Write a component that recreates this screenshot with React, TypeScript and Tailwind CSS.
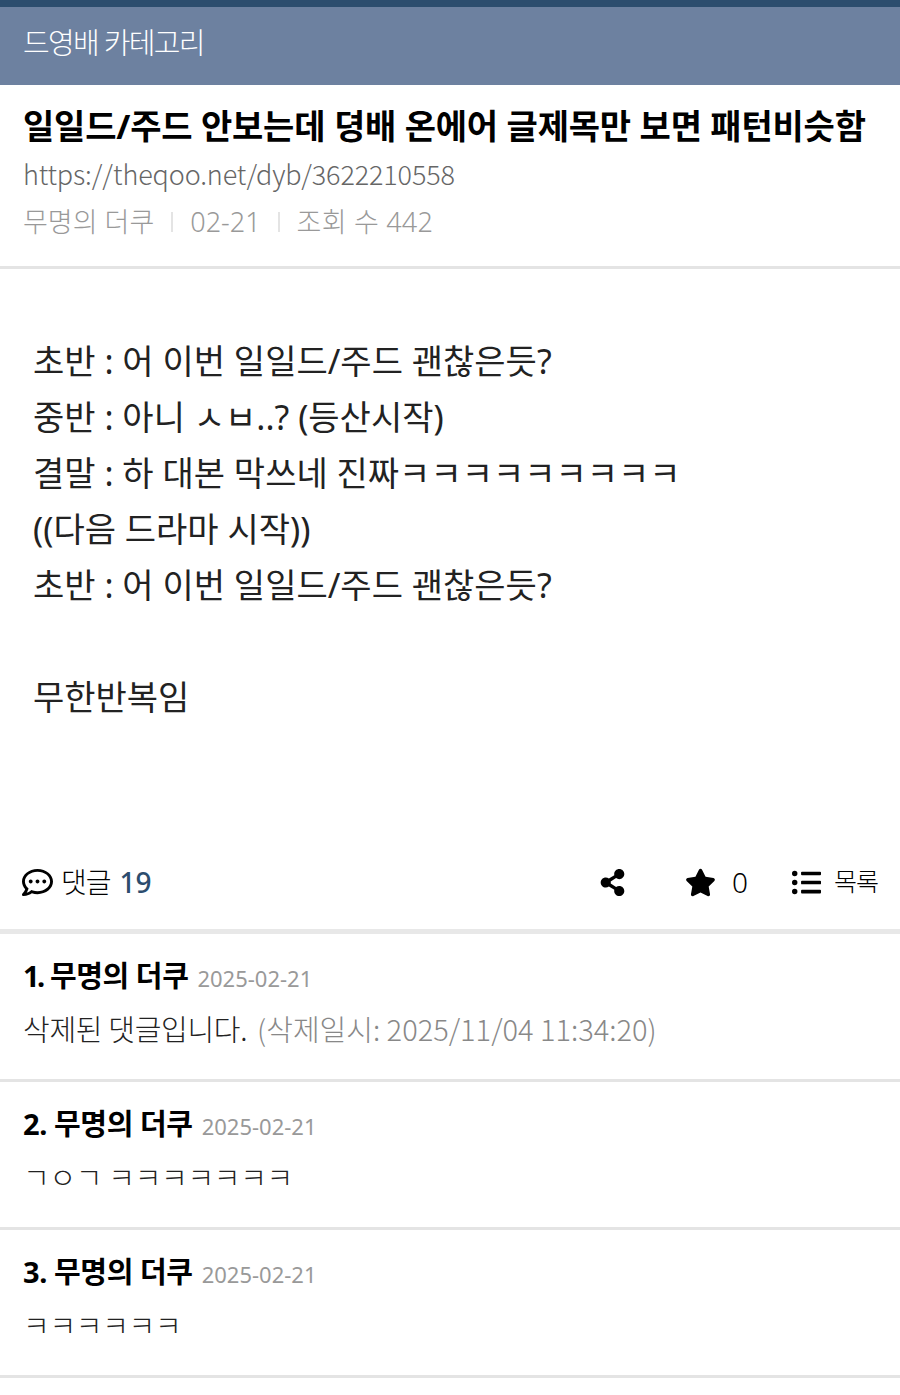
import { FaListUl, FaRegCommentDots, FaShareAlt, FaStar } from "react-icons/fa";

const comments = [
  { no: 1, text: "삭제된 댓글입니다.", deleted: "(삭제일시: 2025/11/04 11:34:20)" },
  { no: 2, text: "ㄱㅇㄱ ㅋㅋㅋㅋㅋㅋㅋ" },
  { no: 3, text: "ㅋㅋㅋㅋㅋㅋ" },
];

const lines = [
  "초반 : 어 이번 일일드/주드 괜찮은듯?",
  "중반 : 아니 ㅅㅂ..? (등산시작)",
  "결말 : 하 대본 막쓰네 진짜ㅋㅋㅋㅋㅋㅋㅋㅋㅋ",
  "((다음 드라마 시작))",
  "초반 : 어 이번 일일드/주드 괜찮은듯?",
  "\u00a0",
  "무한반복임",
];

export default function App() {
  return (
    <div className="h-[1395px] overflow-hidden bg-white font-['Noto_Sans','Noto_Sans_CJK_KR',sans-serif] text-black">
      {/* category bar */}
      <div className="flex h-[85px] items-center border-t-[7px] border-[#2c4d6e] bg-[#6d81a0] px-[23px] pb-[6px]">
        <span className="text-[29px] font-light tracking-[-1.7px] text-white">드영배 카테고리</span>
      </div>

      {/* post head */}
      <div className="h-[184px] border-b-[3px] border-[#e4e4e4] px-[23px] pt-[17px]">
        <h1 className="text-[34px] leading-[48px] font-bold tracking-[-0.2px] whitespace-nowrap">
          일일드/주드 안보는데 뎡배 온에어 글제목만 보면 패턴비슷함
        </h1>
        <div className="font-['Noto_Sans_CJK_KR',sans-serif] text-[27px] leading-[47px] font-light tracking-[-0.15px] text-[#666]">
          https://theqoo.net/dyb/3622210558
        </div>
        <div className="flex items-center pt-[1px] text-[27px] leading-[47px] font-light text-[#999]">
          <span>무명의 더쿠</span>
          <span className="mx-[17px] h-[20px] w-[2px] bg-[#e4e4e4]" />
          <span>02-21</span>
          <span className="mx-[17px] h-[20px] w-[2px] bg-[#e4e4e4]" />
          <span className="tracking-[0.2px]">조회 수 442</span>
        </div>
      </div>

      {/* post body */}
      <div className="h-[577px] px-[33px] pt-[64px] text-[34px] leading-[56px] font-normal text-[#222]">
        {lines.map((line, i) => (
          <div key={i}>{line}</div>
        ))}
      </div>

      {/* action row */}
      <div className="flex h-[88px] items-start border-b-[5px] border-[#e8e8e8] px-[22px]">
        <div className="flex h-[72px] w-full items-center text-[28px] whitespace-nowrap">
          <FaRegCommentDots className="shrink-0 text-[31px]" />
          <span className="ml-[8px] font-light tracking-[-1px]">댓글</span>
          <span className="ml-[9px] font-medium text-[#2c4d6e]">19</span>
          <FaShareAlt className="ml-auto shrink-0 text-[27px]" />
          <FaStar className="ml-[59px] shrink-0 text-[31px]" />
          <span className="ml-[16px] w-[60px] font-light">0</span>
          <FaListUl className="shrink-0 text-[29px]" />
          <span className="ml-[13px] text-[25px] font-light tracking-[-1px]">목록</span>
        </div>
      </div>

      {/* comments */}
      {comments.map((c) => (
        <div key={c.no} className="h-[148px] border-b-[3px] border-[#e4e4e4] px-[23px] pt-[18px]">
          <div className="flex items-baseline leading-[48px]">
            <span className="text-[29px] font-bold tracking-[-0.4px] whitespace-pre">
              <span className={c.no === 1 ? "tracking-[-2.5px]" : ""}>{c.no}.</span> 무명의 더쿠
            </span>
            <span className="ml-[9px] text-[22px] font-normal text-[#999]">2025-02-21</span>
          </div>
          <div className="font-['Noto_Sans_CJK_KR',sans-serif] text-[29px] leading-[52px] font-light text-[#222]">
            <span className="tracking-[-0.3px]">{c.text}</span>
            {c.deleted && <span className="ml-[10px] text-[#888]">{c.deleted}</span>}
          </div>
        </div>
      ))}
    </div>
  );
}
